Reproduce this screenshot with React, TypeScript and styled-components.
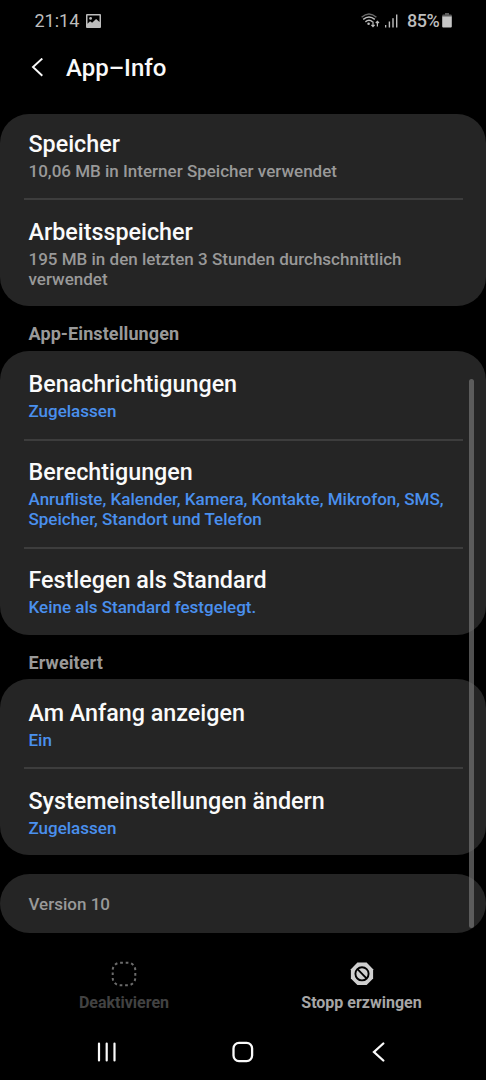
import React from 'react';
import styled, { createGlobalStyle } from 'styled-components';

const GlobalStyle = createGlobalStyle`
  * { box-sizing: border-box; }
  body {
    margin: 0;
    background: #000;
    font-family: Roboto, 'Liberation Sans', sans-serif;
  }
`;

const Screen = styled.div`
  width: 486px;
  height: 1080px;
  display: flex;
  flex-direction: column;
  overflow: hidden;
  background: #000;
`;

const StatusBar = styled.div`
  display: flex;
  align-items: center;
  height: 40px;
  padding: 1px 34px 0 34.5px;
  color: #bdbdbd;
  font-size: 18px;
  font-weight: 400;
  flex: none;
`;

const Clock = styled.span`
  width: 51.5px;
`;

const StatusIcons = styled.div`
  display: flex;
  align-items: center;
  margin-left: auto;
`;

const Battery = styled.span`
  width: 33px;
  margin-left: 9px;
  margin-right: 2px;
  font-weight: 500;
  letter-spacing: -0.5px;
`;

const Header = styled.header`
  display: flex;
  align-items: center;
  height: 56px;
  padding-left: 31px;
  flex: none;
`;

const Heading = styled.h1`
  margin: 0 0 0 22px;
  color: #fafafa;
  font-size: 24px;
  line-height: 30px;
  font-weight: 500;
`;

const Content = styled.main`
  position: relative;
  display: flex;
  flex-direction: column;
  height: 837px;
  padding-top: 18px;
  flex: none;
`;

const Card = styled.section<{ $cut?: boolean }>`
  border-radius: 29px;
  background: #252525;
  overflow: hidden;
  padding-top: ${({ $cut }) => ($cut ? 0 : 4)}px;
  flex: none;
`;

const Row = styled.div<{ $shift: number; $first: boolean }>`
  padding: ${({ $shift, $first }) => ($first ? 15 : 19) + $shift}px 28px
    ${({ $shift }) => 16 - $shift}px 28.5px;
  position: relative;

  &:not(:first-child)::before {
    content: '';
    position: absolute;
    top: 0;
    left: 23.5px;
    right: 23.5px;
    height: 1.5px;
    background: #3d3d3d;
  }
`;

const Title = styled.div`
  color: #fafafa;
  font-size: 23.3px;
  line-height: 28px;
  height: 29px;
  font-weight: 500;
  white-space: nowrap;
`;

const Summary = styled.div<{ $accent?: boolean }>`
  color: ${({ $accent }) => ($accent ? '#4a90ee' : '#999')};
  font-size: 17px;
  line-height: 20px;
  font-weight: 500;
  padding: 2px 0;
  white-space: pre;
`;

const SectionLabel = styled.h2<{ $height: number }>`
  margin: 0;
  height: ${({ $height }) => $height}px;
  padding: 17px 28.5px 0;
  color: #999;
  font-size: 18px;
  letter-spacing: 0.1px;
  line-height: 21px;
  font-weight: 700;
  flex: none;
`;

const VersionCard = styled.section`
  display: flex;
  align-items: center;
  height: 59px;
  margin-top: 19px;
  padding: 1px 28.5px 0;
  border-radius: 29.5px;
  background: #252525;
  color: #999;
  font-size: 17px;
  font-weight: 500;
`;

const Scrollbar = styled.div`
  position: absolute;
  top: 283px;
  right: 12px;
  width: 5px;
  height: 549px;
  border-radius: 2.5px;
  background: rgba(121, 121, 121, 0.66);
`;

const Actions = styled.div`
  display: grid;
  grid-template-columns: 248px 227px;
  height: 90px;
  padding-top: 28px;
  flex: none;
`;

const Action = styled.div<{ $disabled?: boolean }>`
  display: flex;
  flex-direction: column;
  align-items: center;
  gap: 6px;
  color: ${({ $disabled }) => ($disabled ? '#424242' : '#a6a6a6')};
  font-size: 16px;
  line-height: 20px;
  font-weight: 700;
`;

const NavBar = styled.nav`
  display: grid;
  grid-template-columns: 24px 22px 20px;
  justify-content: space-between;
  align-items: center;
  height: 57px;
  padding: 1px 94px 0 94px;
  flex: none;
`;

const HomeIcon = styled.svg`
  margin-left: -2px;
`;

type Item = { title: string; summary: string; accent?: boolean };

const memory: Item[] = [
  { title: 'Speicher', summary: '10,06 MB in Interner Speicher verwendet' },
  { title: 'Arbeitsspeicher', summary: '195 MB in den letzten 3 Stunden durchschnittlich\nverwendet' },
];
const settings: Item[] = [
  { title: 'Benachrichtigungen', summary: 'Zugelassen', accent: true },
  {
    title: 'Berechtigungen',
    summary: 'Anrufliste, Kalender, Kamera, Kontakte, Mikrofon, SMS,\nSpeicher, Standort und Telefon',
    accent: true,
  },
  { title: 'Festlegen als Standard', summary: 'Keine als Standard festgelegt.', accent: true },
];
const advanced: Item[] = [
  { title: 'Am Anfang anzeigen', summary: 'Ein', accent: true },
  { title: 'Systemeinstellungen ändern', summary: 'Zugelassen', accent: true },
];

const List = ({ items, cut, shift = 0 }: { items: Item[]; cut?: boolean; shift?: number }) => (
  <Card $cut={cut}>
    {items.map((it, i) => (
      <Row key={it.title} $shift={shift} $first={i === 0}>
        <Title>{it.title}</Title>
        <Summary $accent={it.accent}>{it.summary}</Summary>
      </Row>
    ))}
  </Card>
);

const PictureIcon = () => (
  <svg width="15" height="14" viewBox="0 0 15 14">
    <path
      fill="#bdbdbd"
      fillRule="evenodd"
      d="M1 0h13q1 0 1 1v12q0 1-1 1H1q-1 0-1-1V1q0-1 1-1zM1.5 1.5v8.3l2.6-2.6 2 1.6 4-3.9 3.4 3.2V1.5z"
    />
    <circle cx="4.6" cy="4.4" r="1.4" fill="#bdbdbd" />
  </svg>
);

const WifiIcon = () => (
  <svg width="19" height="15" viewBox="0 0 19 15" fill="none" stroke="#bdbdbd" strokeWidth="1.4">
    <path d="M.6 4.2Q8 -2.4 15.4 4.2" stroke="#6a6a6a" />
    <path d="M2.2 6.4Q8 1.4 13.8 6.4M4.4 8.9Q8 5.8 11.6 8.9" />
    <circle cx="7.6" cy="10.8" r="1.3" fill="#bdbdbd" stroke="none" />
    <path d="M12 8.4v5M10.4 11.8l1.6 1.7 1.6-1.7M16.4 13.4v-5M14.8 10l1.6-1.7L18 10" strokeWidth="1.2" />
  </svg>
);

const SignalBars = styled.svg`
  margin-left: 5px;
`;

const SignalIcon = () => (
  <SignalBars width="13" height="14" viewBox="0 0 13 14" fill="#bdbdbd">
    <rect x="0" y="11" width="1.3" height="2.5" />
    <rect x="3.7" y="7.5" width="1.4" height="6" />
    <rect x="7.3" y="4.2" width="1.4" height="9.3" />
    <rect x="11" y="0.5" width="1.4" height="13" />
  </SignalBars>
);

const BatteryIcon = () => (
  <svg width="10" height="15" viewBox="0 0 10 15">
    <path d="M3 0h4v1.5h1.8q1 0 1 1V4H.2V2.5q0-1 1-1H3z" fill="#5c5c5c" />
    <path d="M.2 3.6h9.6v9.9q0 1-1 1H1.2q-1 0-1-1z" fill="#c6c6c6" />
  </svg>
);

export default function App() {
  return (
    <>
      <GlobalStyle />
      <Screen>
        <StatusBar>
          <Clock>21:14</Clock>
          <PictureIcon />
          <StatusIcons>
            <WifiIcon />
            <SignalIcon />
            <Battery>85%</Battery>
            <BatteryIcon />
          </StatusIcons>
        </StatusBar>
        <Header>
          <svg width="13" height="20" viewBox="0 0 13 20" fill="none" stroke="#fafafa" strokeWidth="1.9">
            <path d="M11.3 .5 2 9l9.3 8.7" />
          </svg>
          <Heading>App–Info</Heading>
        </Header>
        <Content>
          <List items={memory} cut shift={1} />
          <SectionLabel $height={45}>App-Einstellungen</SectionLabel>
          <List items={settings} />
          <SectionLabel $height={44}>Erweitert</SectionLabel>
          <List items={advanced} shift={1} />
          <VersionCard>Version 10</VersionCard>
          <Scrollbar />
        </Content>
        <Actions>
          <Action $disabled>
            <svg width="26" height="26" viewBox="0 0 26 26" fill="none">
              <rect
                x="1.7" y="1.7" width="22.6" height="22.6" rx="7.5"
                stroke="#6c6c6c" strokeWidth="2" strokeDasharray="2.7 2.81"
              />
            </svg>
            Deaktivieren
          </Action>
          <Action>
            <svg width="26" height="26" viewBox="0 0 26 26" fill="none">
              <path d="M8.4 1.6h9.2l6.5 6.6v9.3l-6.5 6.6H8.4l-6.5-6.6V8.2z" fill="#cfcfcf" />
              <circle cx="13" cy="12.8" r="6.6" stroke="#000" strokeWidth="1.9" />
              <path d="m8.5 8.2 9 9.2" stroke="#000" strokeWidth="1.9" />
            </svg>
            Stopp erzwingen
          </Action>
        </Actions>
        <NavBar>
          <svg width="24" height="20" viewBox="0 0 24 20" fill="none" stroke="#fafafa" strokeWidth="2.2" strokeLinecap="round">
            <path d="M5 1.5v17M12.7 1.5v17M20.5 1.5v17" />
          </svg>
          <HomeIcon width="22" height="22" viewBox="0 0 22 22" fill="none" stroke="#fafafa" strokeWidth="2.3">
            <rect x="1.5" y="1.9" width="18.6" height="18.2" rx="5.5" />
          </HomeIcon>
          <svg width="20" height="20" viewBox="0 0 20 20" fill="none" stroke="#fafafa" strokeWidth="2.3" strokeLinecap="round">
            <path d="M11.3 1.5 2 10l9.3 8.5" />
          </svg>
        </NavBar>
      </Screen>
    </>
  );
}
